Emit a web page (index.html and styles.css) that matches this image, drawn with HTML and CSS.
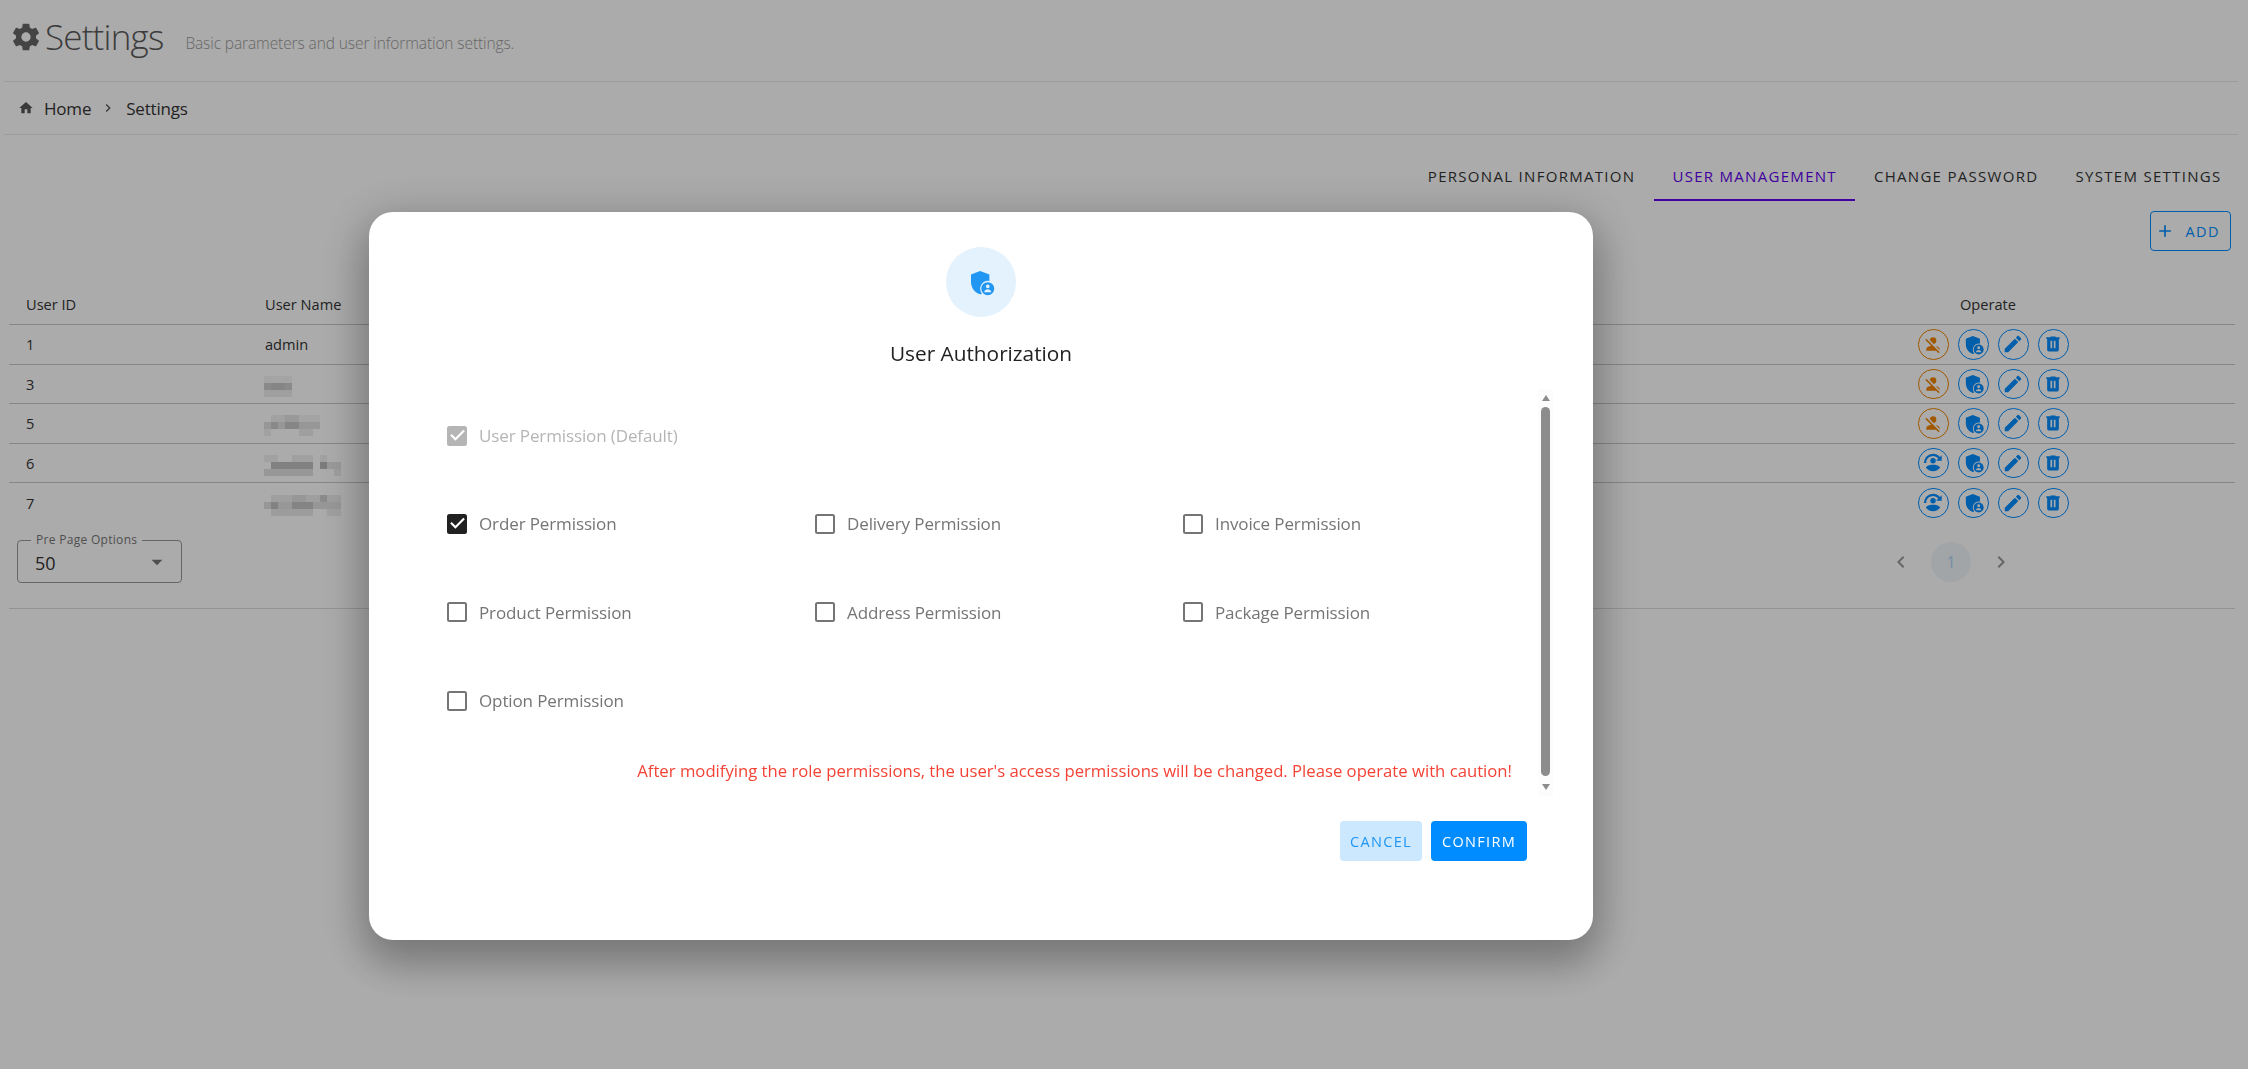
FILE: index.html
```html
<!DOCTYPE html>
<html lang="en">
<head>
<meta charset="utf-8">
<title>Settings</title>
<link rel="stylesheet" href="styles.css">
</head>
<body>
<div class="page">
  <header class="title-bar">
    <svg class="gear" viewBox="0 0 24 24"><path d="M12,15.5A3.5,3.5 0 0,1 8.5,12A3.5,3.5 0 0,1 12,8.5A3.5,3.5 0 0,1 15.5,12A3.5,3.5 0 0,1 12,15.5M19.43,12.97C19.47,12.65 19.5,12.33 19.5,12C19.5,11.67 19.47,11.34 19.43,11L21.54,9.37C21.73,9.22 21.78,8.95 21.66,8.73L19.66,5.27C19.54,5.05 19.27,4.96 19.05,5.05L16.56,6.05C16.04,5.66 15.5,5.32 14.87,5.07L14.5,2.42C14.46,2.18 14.25,2 14,2H10C9.75,2 9.54,2.18 9.5,2.42L9.13,5.07C8.5,5.32 7.96,5.66 7.44,6.05L4.95,5.05C4.73,4.96 4.46,5.05 4.34,5.27L2.34,8.73C2.21,8.95 2.27,9.22 2.46,9.37L4.57,11C4.53,11.34 4.5,11.67 4.5,12C4.5,12.33 4.53,12.65 4.57,12.97L2.46,14.63C2.27,14.78 2.21,15.05 2.34,15.27L4.34,18.73C4.46,18.95 4.73,19.03 4.95,18.95L7.44,17.94C7.96,18.34 8.5,18.68 9.13,18.93L9.5,21.58C9.54,21.82 9.75,22 10,22H14C14.25,22 14.46,21.82 14.5,21.58L14.87,18.93C15.5,18.67 16.04,18.34 16.56,17.94L19.05,18.95C19.27,19.03 19.54,18.95 19.66,18.73L21.66,15.27C21.78,15.05 21.73,14.78 21.54,14.63L19.43,12.97Z"/></svg>
    <h1 class="title">Settings</h1>
    <span class="subtitle">Basic parameters and user information settings.</span>
  </header>
  <nav class="crumbs">
    <svg class="home" viewBox="0 0 24 24"><path d="M10,20V14H14V20H19V12H22L12,3L2,12H5V20H10Z"/></svg>
    <span>Home</span>
    <svg class="crumb-sep" viewBox="0 0 24 24"><path d="M8.59,16.58L13.17,12L8.59,7.41L10,6L16,12L10,18L8.59,16.58Z"/></svg>
    <span>Settings</span>
  </nav>
  <div class="tabs">
    <span class="tab">PERSONAL INFORMATION</span>
    <span class="tab tab-active">USER MANAGEMENT</span>
    <span class="tab">CHANGE PASSWORD</span>
    <span class="tab">SYSTEM SETTINGS</span>
  </div>
  <div class="toolbar">
    <button class="add-btn"><svg class="plus" viewBox="0 0 24 24"><path d="M19,13H13V19H11V13H5V11H11V5H13V11H19V13Z"/></svg><span>ADD</span></button>
  </div>
  <section class="table">
    <div class="row head"><div>User ID</div><div>User Name</div><div class="op-head">Operate</div></div>

    <div class="row"><div>1</div><div>admin</div>
      <div class="ops">
        <span class="op op-warn"><svg viewBox="0 0 24 24"><use href="#i-off"/></svg></span>
        <span class="op op-lg"><svg viewBox="0 0 24 24"><use href="#i-shield"/></svg></span>
        <span class="op op-md"><svg viewBox="0 0 24 24"><use href="#i-pencil"/></svg></span>
        <span class="op"><svg viewBox="0 0 24 24"><use href="#i-trash"/></svg></span>
      </div></div>

    <div class="row"><div>3</div><div>
      <svg class="mosaic" viewBox="0 0 12 3" shape-rendering="crispEdges"><rect x="0" y="0" width="4" height="1" fill-opacity=".05"/><rect x="0" y="1" width="4" height="1" fill-opacity=".24"/><rect x="1" y="1" width="2" height="1" fill-opacity=".05"/><rect x="0" y="2" width="4" height="1" fill-opacity=".09"/></svg></div>
      <div class="ops">
        <span class="op op-warn"><svg viewBox="0 0 24 24"><use href="#i-off"/></svg></span>
        <span class="op op-lg"><svg viewBox="0 0 24 24"><use href="#i-shield"/></svg></span>
        <span class="op op-md"><svg viewBox="0 0 24 24"><use href="#i-pencil"/></svg></span>
        <span class="op"><svg viewBox="0 0 24 24"><use href="#i-trash"/></svg></span>
      </div></div>

    <div class="row"><div>5</div><div>
      <svg class="mosaic" viewBox="0 0 12 3" shape-rendering="crispEdges"><rect x="1" y="0" width="2" height="1" fill-opacity=".07"/><rect x="3" y="0" width="2" height="1" fill-opacity=".13"/><rect x="5" y="0" width="3" height="1" fill-opacity=".05"/><rect x="0" y="1" width="8" height="1" fill-opacity=".15"/><rect x="1" y="1" width="1" height="1" fill-opacity=".12"/><rect x="3" y="1" width="2" height="1" fill-opacity=".14"/><rect x="0" y="2" width="1" height="1" fill-opacity=".07"/><rect x="5" y="2" width="2" height="1" fill-opacity=".09"/></svg></div>
      <div class="ops">
        <span class="op op-warn"><svg viewBox="0 0 24 24"><use href="#i-off"/></svg></span>
        <span class="op op-lg"><svg viewBox="0 0 24 24"><use href="#i-shield"/></svg></span>
        <span class="op op-md"><svg viewBox="0 0 24 24"><use href="#i-pencil"/></svg></span>
        <span class="op"><svg viewBox="0 0 24 24"><use href="#i-trash"/></svg></span>
      </div></div>

    <div class="row"><div>6</div><div>
      <svg class="mosaic" viewBox="0 0 12 3" shape-rendering="crispEdges"><rect x="0" y="0" width="2" height="1" fill-opacity=".07"/><rect x="4" y="0" width="3" height="1" fill-opacity=".08"/><rect x="8" y="0" width="1" height="1" fill-opacity=".07"/><rect x="1" y="1" width="6" height="1" fill-opacity=".3"/><rect x="8" y="1" width="1" height="1" fill-opacity=".34"/><rect x="9" y="1" width="2" height="1" fill-opacity=".13"/><rect x="0" y="2" width="7" height="1" fill-opacity=".15"/><rect x="10" y="2" width="1" height="1" fill-opacity=".09"/></svg></div>
      <div class="ops">
        <span class="op op-md"><svg viewBox="0 0 24 24"><use href="#i-sync"/></svg></span>
        <span class="op op-lg"><svg viewBox="0 0 24 24"><use href="#i-shield"/></svg></span>
        <span class="op op-md"><svg viewBox="0 0 24 24"><use href="#i-pencil"/></svg></span>
        <span class="op"><svg viewBox="0 0 24 24"><use href="#i-trash"/></svg></span>
      </div></div>

    <div class="row"><div>7</div><div>
      <svg class="mosaic" viewBox="0 0 12 3" shape-rendering="crispEdges"><rect x="1" y="0" width="10" height="1" fill-opacity=".09"/><rect x="4" y="0" width="2" height="1" fill-opacity=".06"/><rect x="8" y="0" width="1" height="1" fill-opacity=".16"/><rect x="0" y="1" width="11" height="1" fill-opacity=".14"/><rect x="1" y="1" width="1" height="1" fill-opacity=".18"/><rect x="4" y="1" width="3" height="1" fill-opacity=".16"/><rect x="1" y="2" width="6" height="1" fill-opacity=".11"/><rect x="9" y="2" width="2" height="1" fill-opacity=".08"/></svg></div>
      <div class="ops">
        <span class="op op-md"><svg viewBox="0 0 24 24"><use href="#i-sync"/></svg></span>
        <span class="op op-lg"><svg viewBox="0 0 24 24"><use href="#i-shield"/></svg></span>
        <span class="op op-md"><svg viewBox="0 0 24 24"><use href="#i-pencil"/></svg></span>
        <span class="op"><svg viewBox="0 0 24 24"><use href="#i-trash"/></svg></span>
      </div></div>

    <footer class="foot">
      <div class="select">
        <span class="select-label">Pre Page Options</span>
        <span class="select-value">50</span>
        <svg class="select-arrow" viewBox="0 0 24 24"><path d="M7,10L12,15L17,10H7Z"/></svg>
      </div>
      <div class="pager">
        <span class="pg"><svg viewBox="0 0 24 24"><path d="M15.41,16.58L10.83,12L15.41,7.41L14,6L8,12L14,18L15.41,16.58Z"/></svg></span>
        <span class="pg pg-on">1</span>
        <span class="pg"><svg viewBox="0 0 24 24"><path d="M8.59,16.58L13.17,12L8.59,7.41L10,6L16,12L10,18L8.59,16.58Z"/></svg></span>
      </div>
    </footer>
  </section>
</div>

<div class="scrim"></div>

<div class="dialog">
  <div class="badge">
    <svg viewBox="0 0 24 24"><use href="#i-shield"/></svg>
  </div>
  <h2 class="dialog-title">User Authorization</h2>
  <div class="dialog-body">
    <div class="scroll-content">
      <div class="perm-grid">
        <label class="perm perm-off"><span class="box box-on"><svg viewBox="0 0 24 24"><use href="#i-check"/></svg></span>User Permission (Default)</label>
        <span></span><span></span>
        <label class="perm"><span class="box box-on"><svg viewBox="0 0 24 24"><use href="#i-check"/></svg></span>Order Permission</label>
        <label class="perm"><span class="box"></span>Delivery Permission</label>
        <label class="perm"><span class="box"></span>Invoice Permission</label>
        <label class="perm"><span class="box"></span>Product Permission</label>
        <label class="perm"><span class="box"></span>Address Permission</label>
        <label class="perm"><span class="box"></span>Package Permission</label>
        <label class="perm"><span class="box"></span>Option Permission</label>
      </div>
      <p class="warning">After modifying the role permissions, the user's access permissions will be changed. Please operate with caution!</p>
    </div>
    <div class="scrollbar">
      <span class="sb-up"></span>
      <span class="sb-thumb"></span>
      <span class="sb-down"></span>
    </div>
  </div>
  <div class="actions">
    <button class="btn btn-cancel">CANCEL</button>
    <button class="btn btn-confirm">CONFIRM</button>
  </div>
</div>

<svg class="defs" aria-hidden="true">
  <symbol id="i-off" viewBox="0 0 24 24"><path d="M12,4A4,4 0 0,1 16,8C16,9.95 14.6,11.58 12.75,11.93L8.07,7.25C8.42,5.4 10.05,4 12,4M12.28,14L18.28,20L20,21.72L18.73,23L15.73,20H4V18C4,16.16 6.5,14.61 9.87,14.14L2.78,7.05L4.05,5.78L12.28,14M20,18V19.18L15.14,14.32C18,14.93 20,16.35 20,18Z"/></symbol>
  <symbol id="i-shield" viewBox="0 0 24 24"><path d="M11.3,3.2L18.7,6V11.1A6.3,6.3 0 0,0 12.8,21.3C12.3,21.5 11.8,21.7 11.3,21.8C7,20.5 4,16.5 4,12V6Z"/><path fill-rule="evenodd" d="M17.4,12.1A5.2,5.2 0 1,0 17.4,22.5A5.2,5.2 0 1,0 17.4,12.1ZM17.4,13.9A1.5,1.5 0 1,1 17.4,16.9A1.5,1.5 0 1,1 17.4,13.9ZM14.6,20.2C14.6,18.7 16.2,17.8 17.4,17.8C18.6,17.8 20.2,18.7 20.2,20.2Z"/></symbol>
  <symbol id="i-pencil" viewBox="0 0 24 24"><path d="M20.71,7.04C21.1,6.65 21.1,6 20.71,5.63L18.37,3.29C18,2.9 17.35,2.9 16.96,3.29L15.12,5.12L18.87,8.87M3,17.25V21H6.75L17.81,9.93L14.06,6.18L3,17.25Z"/></symbol>
  <symbol id="i-trash" viewBox="0 0 24 24"><path d="M9,3V4H4V6H5V19A2,2 0 0,0 7,21H17A2,2 0 0,0 19,19V6H20V4H15V3H9M9,8H11V17H9V8M13,8H15V17H13V8Z"/></symbol>
  <symbol id="i-sync" viewBox="0 0 24 24"><path d="M12,2A10,10 0 0,1 19.5,5.4L21.5,3.5V9.5H15.5L17.8,7.2A7.5,7.5 0 0,0 4.5,12H2A10,10 0 0,1 12,2ZM12,6.5A3,3 0 1,1 12,12.5A3,3 0 1,1 12,6.5ZM4.2,17C6,14.5 9,14 12,14C15,14 18,14.5 19.8,17A9.5,9.5 0 0,1 4.2,17Z"/></symbol>
  <symbol id="i-check" viewBox="0 0 24 24"><path d="M10,17L5,12L6.41,10.58L10,14.17L17.59,6.58L19,8L10,17Z"/></symbol>
</svg>
</body>
</html>
```
FILE: styles.css
```css
* { box-sizing: border-box; }
html, body { margin: 0; height: 100%; overflow: hidden; background: #fff; }
body { font-family: "Open Sans", "Noto Sans", "Liberation Sans", sans-serif; color: #222; }
svg { fill: currentColor; display: block; }
.defs { width: 0; height: 0; position: absolute; }

.page { padding: 0 10px 0 4px; width: 2248px; }

.title-bar { height: 82px; border-bottom: 1px solid #e9e9e9; display: flex; align-items: center; padding: 0 0 8px 6px; }
.gear { width: 32px; height: 32px; color: #666; margin-right: 3px; }
.title { margin: 0; font-size: 35px; font-weight: 300; letter-spacing: -.8px; color: #5a5a5a; line-height: 1; }
.subtitle { margin-left: 22px; font-size: 15.5px; font-weight: 300; color: #9a9a9a; letter-spacing: -.1px; position: relative; top: 6px; }

.crumbs { height: 53px; border-bottom: 1px solid #e9e9e9; display: flex; align-items: center; padding-left: 14px; font-size: 17px; color: #333; letter-spacing: -.2px; }
.home { width: 16px; height: 16px; color: #555; margin-right: 10px; }
.crumb-sep { width: 16px; height: 16px; color: #555; margin: 0 10px 0 9px; }

.tabs { display: flex; justify-content: flex-end; height: 66px; padding-top: 18px; margin-right: -2px; }
.tab { padding: 0 18.5px; height: 48px; line-height: 47px; font-size: 15px; letter-spacing: 1.3px; color: #333; border-bottom: 2px solid transparent; }
.tab-active { color: #6200ee; border-bottom-color: #6200ee; }

.toolbar { display: flex; justify-content: flex-end; height: 80px; padding-right: 7px; padding-top: 10px; }
.add-btn { width: 81px; height: 40px; display: flex; align-items: center; padding: 0 0 0 4px; background: none; border: 1.5px solid #008cff; border-radius: 4px; color: #008cff; font: inherit; font-size: 14.5px; letter-spacing: 1.4px; }
.plus { width: 20px; height: 20px; margin-right: 10.5px; }

.table { margin-left: 5px; width: 2226px; font-size: 14.6px; border-bottom: 1px solid #dcdcdc; }
.row { display: grid; grid-template-columns: 239px 1fr 317px; height: 39.5px; align-items: center; padding-left: 17px; border-bottom: 1px solid #c8c8c8; color: #333; }
.row:nth-last-child(2) { border-bottom: 0; }
.head { height: 44px; color: #333; padding-top: 2px; }
.op-head { padding-left: 42px; }
.ops { display: flex; gap: 9.5px; }
.op { width: 30.5px; height: 30.5px; border: 1.3px solid #008cff; border-radius: 50%; color: #008cff; display: flex; align-items: center; justify-content: center; }
.op svg { width: 20px; height: 20px; flex: none; }
.op-lg svg { width: 23px; height: 23px; }
.op-md svg { width: 22px; height: 22px; }
.op-warn { color: #f08400; border-color: #f08400; }
.mosaic { width: 84px; height: 21px; margin: 5px 0 0 -1px; filter: blur(.7px); }

.foot { display: flex; align-items: flex-start; height: 85px; padding: 17px 214px 0 8px; justify-content: space-between; }
.select { position: relative; width: 165px; height: 43px; border: 1px solid #999; border-radius: 4px; display: flex; align-items: center; padding-left: 17px; }
.select-label { position: absolute; left: 13px; top: -8px; padding: 0 5px; background: #fff; font-size: 12px; line-height: 14px; color: #777; letter-spacing: .3px; }
.select-value { font-size: 18px; color: #333; padding-top: 3px; }
.select-arrow { position: absolute; right: 11px; top: 8px; width: 26px; height: 26px; color: #777; }
.pager { display: flex; gap: 10px; margin-top: 2px; }
.pg { width: 40px; height: 40px; border-radius: 50%; display: flex; align-items: center; justify-content: center; color: #aaa; font-size: 16px; }
.pg svg { width: 24px; height: 24px; color: #999; }
.pg-on { background: #f2f6fa; color: #b0d4f5; }

.scrim { position: fixed; inset: 0; background: rgba(0, 0, 0, .33); }

.dialog { position: fixed; left: 369px; top: 212px; width: 1224px; height: 728px; background: #fff; border-radius: 24px; box-shadow: 0 11px 46px 8px rgba(0, 0, 0, .22), 0 24px 38px 3px rgba(0, 0, 0, .14); display: flex; flex-direction: column; align-items: center; padding-top: 35px; }
.badge { width: 70px; height: 70px; border-radius: 50%; background: #e3f2fd; color: #2196f3; display: flex; align-items: center; justify-content: center; flex: none; }
.badge svg { width: 30px; height: 30px; }
.dialog-title { margin: 21px 0 0; font-size: 20.8px; font-weight: 400; color: #222; line-height: 30px; height: 30px; }
.dialog-body { align-self: stretch; margin-top: 17.5px; height: 410px; display: flex; padding-left: 78px; padding-right: 40px; flex: none; }
.scroll-content { flex: 1; min-width: 0; display: flex; flex-direction: column; }
.perm-grid { display: grid; grid-template-columns: repeat(3, 368px); grid-auto-rows: 88.3px; padding-top: 6px; }
.perm { display: flex; align-items: center; gap: 12px; font-size: 17px; color: #757575; height: 88.3px; letter-spacing: -.12px; }
.perm-off { color: #b5b5b5; }
.box { width: 20px; height: 20px; border: 2px solid #757575; border-radius: 2.5px; flex: none; display: flex; align-items: center; justify-content: center; }
.box svg { width: 25px; height: 25px; flex: none; color: #fff; }
.box-on { background: #212121; border-color: #212121; }
.perm-off .box-on { background: #b5b5b5; border-color: #b5b5b5; }
.warning { margin: 14px 0 0; padding-right: 26px; text-align: right; font-size: 16.7px; color: #f44336; line-height: 24px; white-space: nowrap; }
.scrollbar { width: 15px; display: flex; flex-direction: column; align-items: center; background: #fcfcfc; flex: none; margin-top: 3px; }
.sb-up, .sb-down { width: 0; height: 0; border-left: 4.5px solid transparent; border-right: 4.5px solid transparent; flex: none; }
.sb-up { margin-top: 6px; border-bottom: 6px solid #8c8c8c; }
.sb-down { margin-top: 8px; border-top: 6px solid #8c8c8c; }
.sb-thumb { width: 9px; height: 369px; margin-top: 6px; background: #8c8c8c; border-radius: 5px; flex: none; }
.actions { align-self: stretch; display: flex; justify-content: flex-end; gap: 9px; margin-top: 25.5px; padding-right: 66px; }
.btn { height: 40px; border: 0; border-radius: 4px; font: inherit; font-size: 14.5px; letter-spacing: 1.3px; padding: 0; }
.btn-cancel { width: 82px; background: #cce8ff; color: #2196f3; }
.btn-confirm { width: 96px; background: #008cff; color: #fff; }
```
